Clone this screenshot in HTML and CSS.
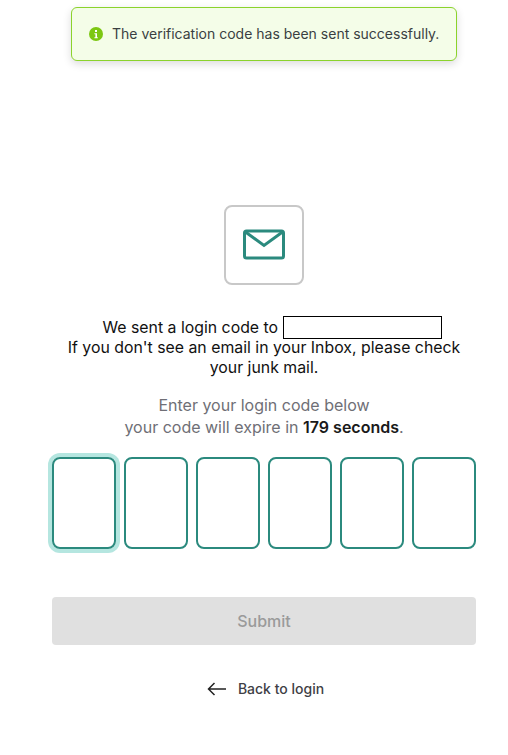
FILE: index.html
```html
<!DOCTYPE html>
<html lang="en">
<head>
<meta charset="utf-8">
<title>Login code</title>
<link rel="stylesheet" href="styles.css">
</head>
<body>
<div class="toast">
  <svg class="toast-icon" width="14" height="14" viewBox="0 0 14 14"><circle cx="7" cy="7" r="7" fill="#7cc712"/><rect x="6" y="3" width="2" height="2" fill="#fff"/><path d="M5.400 6.200H8v4h.8v1H5.400v-1h1v-3h-1z" fill="#fff"/></svg>
  <span>The verification code has been sent successfully.</span>
</div>
<main class="page">
  <div class="mail-box">
    <svg width="44" height="32" viewBox="0 0 44 32" fill="none" stroke="#2b8a7e" stroke-width="3"><rect x="2.500" y="2" width="39" height="27" rx="2"/><path d="M3.500 3L22 16.500 40.500 3"/></svg>
  </div>
  <div class="sent">
    <div class="sent-first">We sent a login code to <span class="email"></span></div>
    <div>If you don't see an email in your Inbox, please check your junk mail.</div>
  </div>
  <div class="hint">
    <div>Enter your login code below</div>
    <div>your code will expire in <strong>179 seconds</strong>.</div>
  </div>
  <div class="code">
    <div class="digit focused"></div>
    <div class="digit"></div>
    <div class="digit"></div>
    <div class="digit"></div>
    <div class="digit"></div>
    <div class="digit"></div>
  </div>
  <button class="submit" type="button" disabled>Submit</button>
  <a class="back" href="#">
    <svg width="20" height="14" viewBox="0 0 20 14" fill="none" stroke="#222" stroke-width="1.500"><path d="M19 7H1.500M7.500 1L1.500 7l6 6"/></svg>
    <span>Back to login</span>
  </a>
</main>
</body>
</html>
```
FILE: styles.css
```css
* { box-sizing: border-box; }
html, body { margin: 0; padding: 0; }
body { background: #fff; font-family: Inter, "Liberation Sans", sans-serif; color: #1a1a1a; }
.toast {
  position: absolute; top: 7px; left: 71px; width: 386px; height: 54px;
  display: flex; align-items: center; gap: 9px; padding-left: 17px; padding-bottom: 1px;
  background: #f4fde8; border: 1px solid #8bd32c; border-radius: 6px;
  box-shadow: 0 3px 8px rgba(0,0,0,.14);
  font-size: 14px; color: #3a3f42;
}
.toast-icon { flex: none; }
.page { display: flex; flex-direction: column; align-items: center; padding: 205px 32px 0 52px; }
.mail-box {
  width: 80px; height: 80px; border: 2px solid #c8c8c8; border-radius: 8px;
  display: flex; align-items: center; justify-content: center;
}
.sent { margin-top: 33px; width: 410px; text-align: center; font-size: 15.850px; line-height: 20px; color: #111; }
.sent-first { padding-left: 16px; }
.email { display: inline-block; width: 159px; height: 23px; margin: -2px 0; border: 1px solid #000; vertical-align: -4px; background: #fff; }
.hint { margin-top: 16px; text-align: center; font-size: 16px; line-height: 22px; color: #6f6f76; }
.hint strong { font-weight: 600; color: #1a1a1a; }
.code { margin-top: 19px; display: flex; gap: 8px; width: 424px; }
.digit { width: 64px; height: 92px; border: 2px solid #2b8a7e; border-radius: 8px; }
.digit.focused { box-shadow: 0 0 0 4px #b5e6e0; }
.submit {
  margin-top: 48px; width: 424px; height: 48px; border: 0; border-radius: 4px;
  background: #e0e0e0; color: #9a9a9a; font: 500 16px Inter, "Liberation Sans", sans-serif;
}
.back { margin-top: 35px; margin-left: 3px; display: flex; align-items: center; gap: 11px; font-size: 14px; font-weight: 500; color: #3f3f46; text-decoration: none; }
```
